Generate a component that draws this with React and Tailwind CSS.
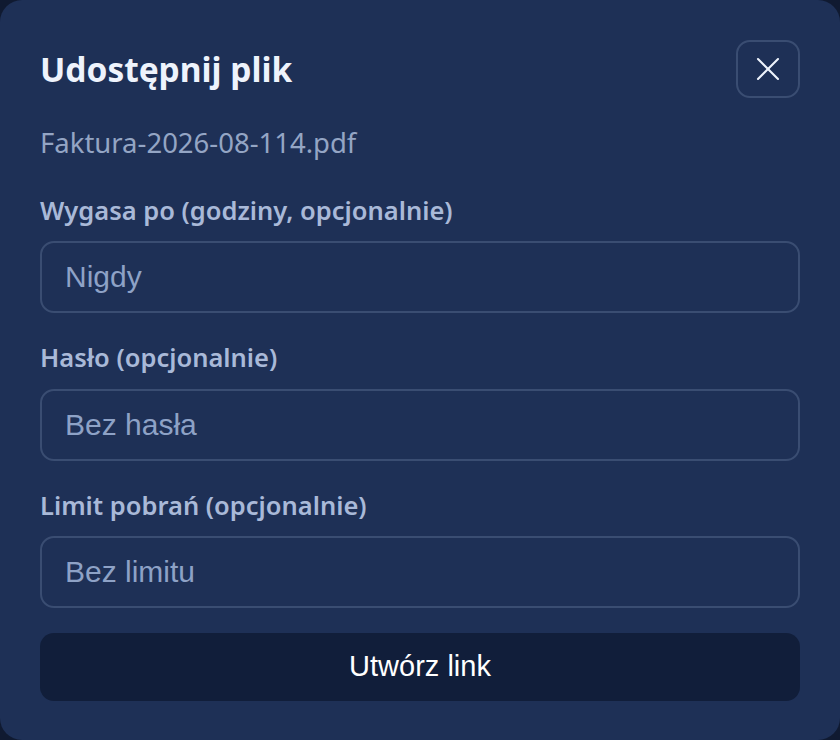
import React from "react";
import { X } from "lucide-react";

function Field({ label, placeholder }) {
  return (
    <div className="flex flex-col">
      <label className="text-[25.5px] font-semibold text-[#a9b9d8] leading-none">{label}</label>
      <input
        placeholder={placeholder}
        className="mt-[18px] h-[72px] w-full rounded-[14px] border-2 border-[#3a4d72] bg-transparent px-[23px] text-[30px] text-[#dbe4f5] outline-none placeholder:text-[#8ea2c6]"
        style={{ fontFamily: '"Liberation Sans", Arial, sans-serif' }}
      />
    </div>
  );
}

export default function App() {
  return (
    <div className="h-[740px] w-[840px] bg-[#101a31]" style={{ fontFamily: '"Noto Sans", "Open Sans", sans-serif' }}>
      <div className="flex h-full w-full flex-col rounded-[22px] bg-[#1e3056] px-10 pt-10">
        {/* Header */}
        <div className="flex h-[46px] items-start justify-between">
          <h2 className="mt-[13px] text-[33.5px] font-bold leading-none text-[#eef3fc]">Udostępnij plik</h2>
          <button className="flex h-[58px] w-[64px] shrink-0 items-center justify-center rounded-[14px] border-2 border-[#3a4d72] text-[#eef3fc]">
            <X size={40} strokeWidth={1.25} />
          </button>
        </div>
        <p className="mt-[43px] text-[27.5px] leading-none text-[#94a5c4]">Faktura-2026-08-114.pdf</p>

        <div className="mt-[41px] flex flex-col gap-[32px]">
          <Field label="Wygasa po (godziny, opcjonalnie)" placeholder="Nigdy" />
          <Field label="Hasło (opcjonalnie)" placeholder="Bez hasła" />
          <Field label="Limit pobrań (opcjonalnie)" placeholder="Bez limitu" />
        </div>

        <button
          className="mt-[25px] h-[68px] w-full rounded-[14px] bg-[#111e3a] text-[29px] text-white"
          style={{ fontFamily: '"Liberation Sans", Arial, sans-serif' }}
        >
          Utwórz link
        </button>
      </div>
    </div>
  );
}
